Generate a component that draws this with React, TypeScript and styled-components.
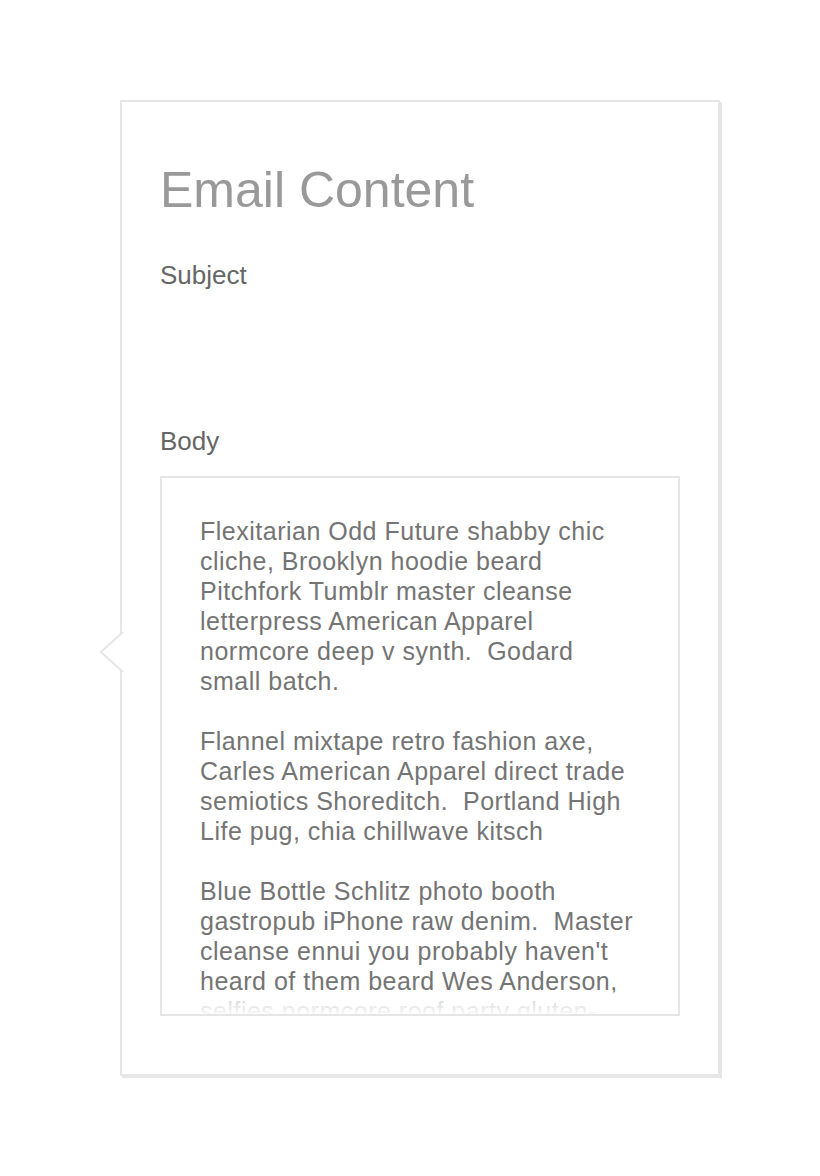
import React from "react";
import styled, { createGlobalStyle } from "styled-components";

const Global = createGlobalStyle`
  html, body { margin: 0; padding: 0; background: #ffffff; }
  body { font-family: "Liberation Sans", Arial, Helvetica, sans-serif; }
`;

const Page = styled.div`
  width: 820px;
  min-height: 1176px;
  padding-top: 100px;
  padding-left: 120px;
  box-sizing: border-box;
`;

const Card = styled.section`
  position: relative;
  width: 600px;
  height: 976px;
  box-sizing: border-box;
  border: 2px solid #e6e6e6;
  box-shadow: 2px 2px 0 #e6e6e6;
  background: #fff;
  padding: 58px 38px 0 38px;
  display: flex;
  flex-direction: column;
`;

const Pointer = styled.svg`
  position: absolute;
  left: -22px;
  top: 528px;
  width: 24px;
  height: 44px;
  overflow: visible;
`;

const Title = styled.h1`
  margin: 0;
  font-size: 50px;
  line-height: 60px;
  font-weight: 400;
  color: #999999;
`;

const Label = styled.label`
  display: block;
  font-size: 26px;
  line-height: 30px;
  color: #666666;
  margin-top: ${(p: { $top: number }) => p.$top}px;
`;

const SubjectField = styled.div`
  height: 136px;
`;

const BodyBox = styled.div`
  position: relative;
  margin-top: 20px;
  width: 520px;
  height: 540px;
  box-sizing: border-box;
  border: 2px solid #e6e6e6;
  overflow: hidden;
  padding: 38px 38px 0 38px;
`;

const BodyText = styled.div`
  width: 438px;
  font-size: 25px;
  letter-spacing: 0.5px;
  line-height: 30px;
  color: #747474;
  white-space: pre-wrap;
`;

const Fade = styled.div`
  position: absolute;
  left: 0;
  right: 0;
  bottom: 0;
  height: 22px;
  background: linear-gradient(to bottom, rgba(255,255,255,0.6), rgba(255,255,255,0.95));
`;

const text = `Flexitarian Odd Future shabby chic cliche, Brooklyn hoodie beard Pitchfork Tumblr master cleanse letterpress American Apparel normcore deep v synth.  Godard small batch.

Flannel mixtape retro fashion axe, Carles American Apparel direct trade semiotics Shoreditch.  Portland High Life pug, chia chillwave kitsch

Blue Bottle Schlitz photo booth gastropub iPhone raw denim.  Master cleanse ennui you probably haven't heard of them beard Wes Anderson, selfies normcore roof party gluten-free ethical.`;

export default function App() {
  return (
    <>
      <Global />
      <Page>
        <Card>
          <Pointer viewBox="0 0 24 44">
            <polygon points="24,2 2,22 24,42" fill="#ffffff" />
            <polyline points="23,2 1,22 23,42" fill="none" stroke="#e6e6e6" strokeWidth="2" />
          </Pointer>
          <Title>Email Content</Title>
          <Label $top={40}>Subject</Label>
          <SubjectField />
          <Label $top={0}>Body</Label>
          <BodyBox>
            <BodyText>{text}</BodyText>
            <Fade />
          </BodyBox>
        </Card>
      </Page>
    </>
  );
}
